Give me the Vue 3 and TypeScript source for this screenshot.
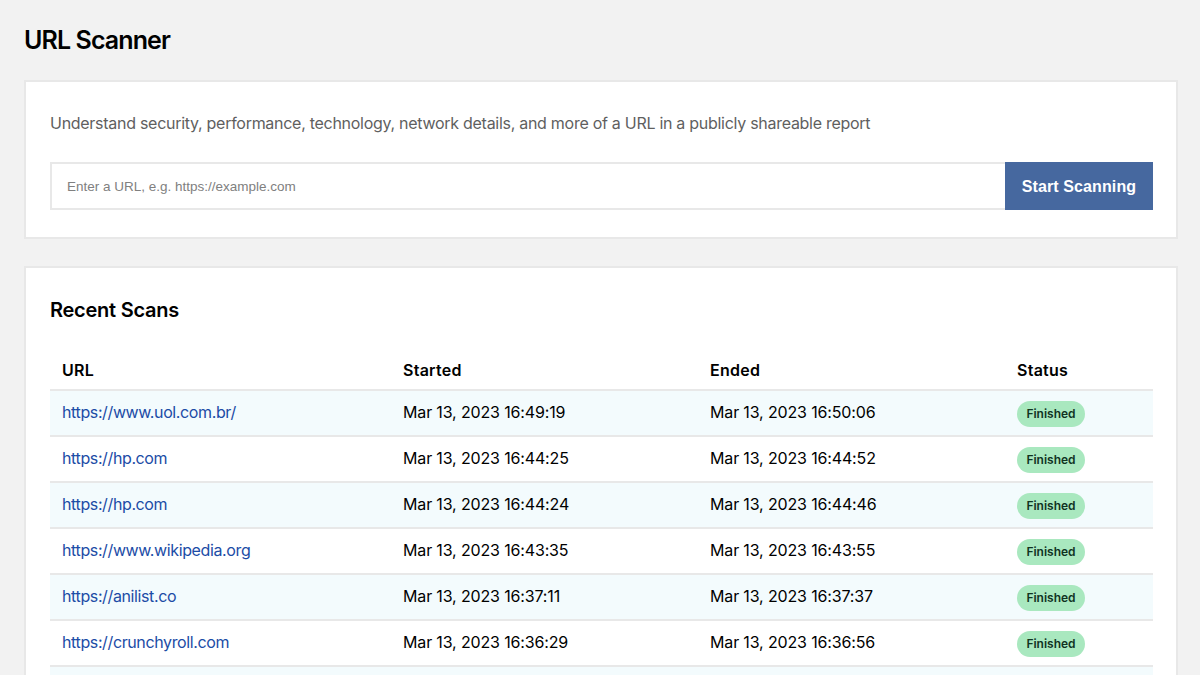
<script setup lang="ts">
interface Scan { url: string; started: string; ended: string; status: string }
const scans: Scan[] = [
  { url: 'https://www.uol.com.br/', started: 'Mar 13, 2023 16:49:19', ended: 'Mar 13, 2023 16:50:06', status: 'Finished' },
  { url: 'https://hp.com', started: 'Mar 13, 2023 16:44:25', ended: 'Mar 13, 2023 16:44:52', status: 'Finished' },
  { url: 'https://hp.com', started: 'Mar 13, 2023 16:44:24', ended: 'Mar 13, 2023 16:44:46', status: 'Finished' },
  { url: 'https://www.wikipedia.org', started: 'Mar 13, 2023 16:43:35', ended: 'Mar 13, 2023 16:43:55', status: 'Finished' },
  { url: 'https://anilist.co', started: 'Mar 13, 2023 16:37:11', ended: 'Mar 13, 2023 16:37:37', status: 'Finished' },
  { url: 'https://crunchyroll.com', started: 'Mar 13, 2023 16:36:29', ended: 'Mar 13, 2023 16:36:56', status: 'Finished' }
]
</script>

<template>
  <div class="page">
    <h1 class="title">URL Scanner</h1>
    <section class="card intro">
      <p class="lead">Understand security, performance, technology, network details, and more of a URL in a publicly shareable report</p>
      <form class="scan-form" @submit.prevent>
        <input class="url-input" type="text" placeholder="Enter a URL, e.g. https://example.com" />
        <button class="scan-btn" type="submit">Start Scanning</button>
      </form>
    </section>
    <section class="card recent">
      <h2 class="subtitle">Recent Scans</h2>
      <table class="scans">
        <colgroup>
          <col class="c1" /><col class="c2" /><col class="c3" /><col class="c4" />
        </colgroup>
        <thead>
          <tr><th>URL</th><th>Started</th><th>Ended</th><th>Status</th></tr>
        </thead>
        <tbody>
          <tr v-for="(s, i) in scans" :key="i">
            <td><a class="link" href="#">{{ s.url }}</a></td>
            <td class="date">{{ s.started }}</td>
            <td class="date">{{ s.ended }}</td>
            <td><span class="badge">{{ s.status }}</span></td>
          </tr>
          <tr class="cut-row"><td colspan="4"></td></tr>
        </tbody>
      </table>
    </section>
  </div>
</template>

<style>
html, body { margin: 0; height: 100%; overflow: hidden; background: #f2f2f2; }
</style>

<style scoped>
.page {
  box-sizing: border-box;
  height: 675px;
  overflow: hidden;
  padding: 24px 22px 0 24px;
  background: #f2f2f2;
  font-family: Inter, "Liberation Sans", sans-serif;
  color: #000;
}
.title {
  margin: 0 0 24px;
  font-size: 25px;
  line-height: 32px;
  font-weight: 600;
  letter-spacing: -0.9px;
}
.card {
  box-sizing: border-box;
  background: #fff;
  border: 2px solid #e8e8e8;
  padding: 24px 23px 24px 24px;
}
.intro { height: 159px; margin-bottom: 27px; padding-top: 29px; }
.lead {
  margin: 0 0 27px;
  font-size: 16px;
  line-height: 24px;
  letter-spacing: -0.28px;
  color: #5f5f5f;
}
.scan-form { display: flex; height: 48px; }
.url-input {
  flex: 1;
  min-width: 0;
  box-sizing: border-box;
  border: 2px solid #e8e8e8;
  border-right: 0;
  padding: 0 15px;
  font: 13.5px "Liberation Sans", Arial, sans-serif;
  color: #333;
  background: #fff;
  outline: none;
}
.url-input::placeholder { color: #808080; opacity: 1; }
.scan-btn {
  width: 148px;
  border: 0;
  background: #46689f;
  color: #fff;
  font: 700 16px "Liberation Sans", Arial, sans-serif;
  letter-spacing: 0.1px;
  padding: 2px 0 0;
}
.recent { padding-top: 28px; height: 500px; }
.subtitle {
  margin: 0 0 35px;
  font-size: 20px;
  line-height: 28px;
  font-weight: 600;
  letter-spacing: -0.25px;
}
.scans { width: 100%; border-collapse: collapse; table-layout: fixed; font-size: 16px; }
.c1 { width: 341px; }
.c2 { width: 307px; }
.c3 { width: 307px; }
th {
  text-align: left;
  font-weight: 600;
  padding: 0 12px;
  height: 30px;
  vertical-align: top;
  line-height: 22px;
  letter-spacing: 0.25px;
  border-bottom: 2px solid #e8e8e8;
}
td {
  height: 46px;
  box-sizing: border-box;
  padding: 0 12px 2px;
  border-bottom: 2px solid #e8e8e8;
  font-size: 16px;
}
.date { letter-spacing: -0.15px; }
tbody tr:nth-child(odd) td { background: #f3fbfd; }
.link { color: #1c4ca6; text-decoration: none; letter-spacing: -0.38px; }
.badge {
  display: inline-block;
  box-sizing: border-box;
  width: 68px;
  height: 26px;
  line-height: 26px;
  margin-top: 4px;
  border-radius: 13px;
  background: #a9e8bf;
  color: #10331f;
  text-align: center;
  font-size: 12px;
  font-weight: 600;
  vertical-align: middle;
}
</style>
